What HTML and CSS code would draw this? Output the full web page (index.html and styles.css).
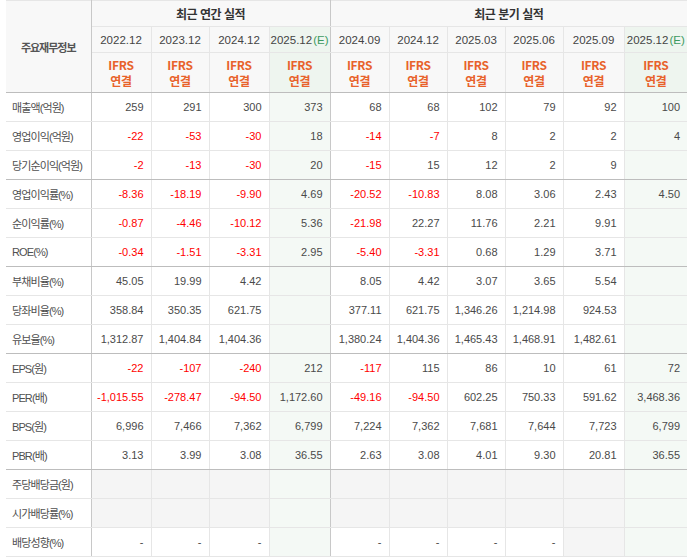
FILE: index.html
```html
<!DOCTYPE html>
<html lang="ko">
<head>
<meta charset="utf-8">
<title>주요재무정보</title>
<link rel="stylesheet" href="styles.css">
</head>
<body>
<div class="wrap">
<table class="fin">
  <colgroup>
    <col class="c-label">
    <col class="c-a"><col class="c-b"><col class="c-a"><col class="c-e">
    <col class="c-q"><col class="c-b"><col class="c-b"><col class="c-b"><col class="c-e"><col class="c-qe">
  </colgroup>
  <thead>
    <tr class="h1">
      <th rowspan="3" class="lbl-head gsep">주요재무정보</th>
      <th colspan="4" class="title gsep">최근 연간 실적</th>
      <th colspan="6" class="title">최근 분기 실적</th>
    </tr>
    <tr class="h2">
      <th>2022.12</th><th>2023.12</th><th>2024.12</th><th class="est gsep">2025.12<span class="e">(E)</span></th>
      <th>2024.09</th><th>2024.12</th><th>2025.03</th><th>2025.06</th><th>2025.09</th><th class="est">2025.12<span class="e">(E)</span></th>
    </tr>
    <tr class="h3">
      <th class="ifrs">IFRS<br>연결</th><th class="ifrs">IFRS<br>연결</th><th class="ifrs">IFRS<br>연결</th><th class="ifrs est gsep">IFRS<br>연결</th>
      <th class="ifrs">IFRS<br>연결</th><th class="ifrs">IFRS<br>연결</th><th class="ifrs">IFRS<br>연결</th><th class="ifrs">IFRS<br>연결</th><th class="ifrs">IFRS<br>연결</th><th class="ifrs est">IFRS<br>연결</th>
    </tr>
  </thead>
  <tbody>
    <tr><th>매출액(억원)</th><td>259</td><td>291</td><td>300</td><td class="est gsep">373</td><td>68</td><td>68</td><td>102</td><td>79</td><td>92</td><td class="est">100</td></tr>
    <tr><th>영업이익(억원)</th><td class="neg">-22</td><td class="neg">-53</td><td class="neg">-30</td><td class="est gsep">18</td><td class="neg">-14</td><td class="neg">-7</td><td>8</td><td>2</td><td>2</td><td class="est">4</td></tr>
    <tr class="grp"><th>당기순이익(억원)</th><td class="neg">-2</td><td class="neg">-13</td><td class="neg">-30</td><td class="est gsep">20</td><td class="neg">-15</td><td>15</td><td>12</td><td>2</td><td>9</td><td class="est"></td></tr>
    <tr><th>영업이익률(%)</th><td class="neg">-8.36</td><td class="neg">-18.19</td><td class="neg">-9.90</td><td class="est gsep">4.69</td><td class="neg">-20.52</td><td class="neg">-10.83</td><td>8.08</td><td>3.06</td><td>2.43</td><td class="est">4.50</td></tr>
    <tr><th>순이익률(%)</th><td class="neg">-0.87</td><td class="neg">-4.46</td><td class="neg">-10.12</td><td class="est gsep">5.36</td><td class="neg">-21.98</td><td>22.27</td><td>11.76</td><td>2.21</td><td>9.91</td><td class="est"></td></tr>
    <tr class="grp"><th>ROE(%)</th><td class="neg">-0.34</td><td class="neg">-1.51</td><td class="neg">-3.31</td><td class="est gsep">2.95</td><td class="neg">-5.40</td><td class="neg">-3.31</td><td>0.68</td><td>1.29</td><td>3.71</td><td class="est"></td></tr>
    <tr><th>부채비율(%)</th><td>45.05</td><td>19.99</td><td>4.42</td><td class="est gsep"></td><td>8.05</td><td>4.42</td><td>3.07</td><td>3.65</td><td>5.54</td><td class="est"></td></tr>
    <tr><th>당좌비율(%)</th><td>358.84</td><td>350.35</td><td>621.75</td><td class="est gsep"></td><td>377.11</td><td>621.75</td><td>1,346.26</td><td>1,214.98</td><td>924.53</td><td class="est"></td></tr>
    <tr class="grp"><th>유보율(%)</th><td>1,312.87</td><td>1,404.84</td><td>1,404.36</td><td class="est gsep"></td><td>1,380.24</td><td>1,404.36</td><td>1,465.43</td><td>1,468.91</td><td>1,482.61</td><td class="est"></td></tr>
    <tr><th>EPS(원)</th><td class="neg">-22</td><td class="neg">-107</td><td class="neg">-240</td><td class="est gsep">212</td><td class="neg">-117</td><td>115</td><td>86</td><td>10</td><td>61</td><td class="est">72</td></tr>
    <tr><th>PER(배)</th><td class="neg">-1,015.55</td><td class="neg">-278.47</td><td class="neg">-94.50</td><td class="est gsep">1,172.60</td><td class="neg">-49.16</td><td class="neg">-94.50</td><td>602.25</td><td>750.33</td><td>591.62</td><td class="est">3,468.36</td></tr>
    <tr><th>BPS(원)</th><td>6,996</td><td>7,466</td><td>7,362</td><td class="est gsep">6,799</td><td>7,224</td><td>7,362</td><td>7,681</td><td>7,644</td><td>7,723</td><td class="est">6,799</td></tr>
    <tr class="grp"><th>PBR(배)</th><td>3.13</td><td>3.99</td><td>3.08</td><td class="est gsep">36.55</td><td>2.63</td><td>3.08</td><td>4.01</td><td>9.30</td><td>20.81</td><td class="est">36.55</td></tr>
    <tr><th>주당배당금(원)</th><td class="nil"></td><td class="nil"></td><td class="nil"></td><td class="est gsep"></td><td class="nil"></td><td class="nil"></td><td class="nil"></td><td class="nil"></td><td class="nil"></td><td class="est"></td></tr>
    <tr><th>시가배당률(%)</th><td class="nil"></td><td class="nil"></td><td class="nil"></td><td class="est gsep"></td><td class="nil"></td><td class="nil"></td><td class="nil"></td><td class="nil"></td><td class="nil"></td><td class="est"></td></tr>
    <tr class="last"><th>배당성향(%)</th><td>-</td><td>-</td><td>-</td><td class="est gsep"></td><td>-</td><td>-</td><td>-</td><td>-</td><td class="nil"></td><td class="est"></td></tr>
  </tbody>
</table>
</div>
</body>
</html>
```

FILE: styles.css
```css
html, body {
  margin: 0;
  padding: 0;
  background: #fff;
}
.wrap {
  padding-left: 6px;
}
.fin {
  border-collapse: collapse;
  table-layout: fixed;
  width: 681px;
  font-family: "Liberation Sans", "Noto Sans CJK KR", sans-serif;
  font-size: 11px;
  color: #4a4a4a;
  border-top: 1px solid #c8c8c8;
  border-bottom: 1px solid #c0c0c0;
}
.c-label { width: 85px; }
.c-a { width: 60px; }
.c-b { width: 58px; }
.c-e { width: 61px; }
.c-q { width: 59px; }
.c-qe { width: 63px; }

.fin th, .fin td {
  border: 1px solid #e6e6e6;
  padding: 0;
  font-weight: normal;
}
.fin tr > :first-child { border-left: none; }
.fin tr > :last-child { border-right: none; }

.fin thead th {
  background: #f8f8f8;
  text-align: center;
  color: #444;
  white-space: nowrap;
}
.fin .h1 { height: 26px; }
.fin .h2 { height: 26px; }
.fin .h3 { height: 40px; }
.fin thead th.title {
  font-family: "Noto Sans CJK KR", sans-serif;
  font-weight: bold;
  color: #333;
  font-size: 12px;
  letter-spacing: -0.5px;
}
.fin thead th.lbl-head {
  font-family: "Noto Sans CJK KR", sans-serif;
  font-weight: bold;
  color: #555;
  letter-spacing: -1px;
  border-bottom: 1px solid #bdbdbd;
  border-right: 1px solid #c8c8c8;
}
.fin .h2 th { font-size: 11.5px; color: #444; }
.fin .e { color: #3c9a5f; margin-left: 1px; }
.fin thead th.ifrs {
  font-family: "Noto Sans CJK KR", sans-serif;
  color: #e8622b;
  font-weight: bold;
  font-size: 12px;
  letter-spacing: -0.3px;
  line-height: 16px;
  padding-top: 1px;
  border-bottom: 1px solid #bdbdbd;
}
.fin thead th.est { background: #eef5ef; }

.fin tbody tr { height: 29px; }
.fin tbody th {
  text-align: left;
  padding-left: 6px;
  font-family: "Liberation Sans", "Noto Sans CJK KR", sans-serif;
  color: #505050;
  letter-spacing: -0.9px;
  white-space: nowrap;
  background: #fff;
  border-right: 1px solid #c8c8c8;
}
.fin tbody td {
  text-align: right;
  padding-right: 7px;
  color: #4a4a4a;
  white-space: nowrap;
}
.fin tbody td.neg { color: #f00; }
.fin tbody td.nil { background: #f5f5f5; }
.fin tbody td.est { background: #f4f9f5; }
.fin .gsep, .fin tbody td.gsep { border-right: 1px solid #c8c8c8; }
.fin tbody tr.grp > th, .fin tbody tr.grp > td { border-bottom: 1px solid #bdbdbd; }
```
